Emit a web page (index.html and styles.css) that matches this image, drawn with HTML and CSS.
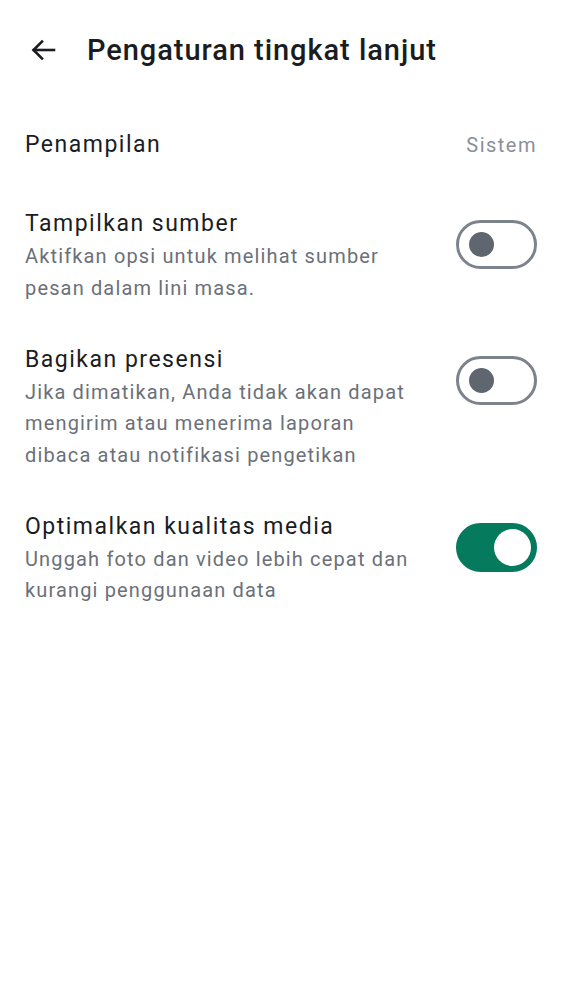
FILE: index.html
```html
<!DOCTYPE html>
<html lang="id">
<head>
<meta charset="utf-8">
<title>Pengaturan tingkat lanjut</title>
<link rel="stylesheet" href="styles.css">
</head>
<body>
<div class="screen">
  <header class="topbar">
    <button class="back" aria-label="Kembali">
      <svg width="28" height="28" viewBox="0 0 28 28" fill="none" stroke="#1b1c21" stroke-width="2.6" stroke-linecap="square" stroke-linejoin="miter">
        <path d="M25 14H5"/>
        <path d="M13 5.5L4.5 14l8.5 8.5"/>
      </svg>
    </button>
    <h1 class="title">Pengaturan tingkat lanjut</h1>
  </header>

  <div class="list">
    <div class="row row-simple">
      <span class="label">Penampilan</span>
      <span class="value">Sistem</span>
    </div>

    <div class="row">
      <div class="text">
        <div class="label">Tampilkan sumber</div>
        <div class="desc">Aktifkan opsi untuk melihat sumber pesan dalam lini masa.</div>
      </div>
      <div class="switch"><span class="knob"></span></div>
    </div>

    <div class="row">
      <div class="text">
        <div class="label">Bagikan presensi</div>
        <div class="desc">Jika dimatikan, Anda tidak akan dapat mengirim atau menerima laporan dibaca atau notifikasi pengetikan</div>
      </div>
      <div class="switch"><span class="knob"></span></div>
    </div>

    <div class="row">
      <div class="text">
        <div class="label">Optimalkan kualitas media</div>
        <div class="desc">Unggah foto dan video lebih cepat dan kurangi penggunaan data</div>
      </div>
      <div class="switch on"><span class="knob"></span></div>
    </div>
  </div>
</div>
</body>
</html>
```

FILE: styles.css
```css
* { box-sizing: border-box; }
html, body {
  margin: 0;
  padding: 0;
  background: #ffffff;
}
body {
  font-family: Roboto, "Noto Sans", Arial, sans-serif;
  color: #1b1c21;
}
.screen {
  width: 562px;
  min-height: 1000px;
}
.topbar {
  display: flex;
  align-items: center;
  height: 100px;
  padding: 0 0 0 28px;
}
.back {
  display: flex;
  align-items: center;
  justify-content: center;
  width: 30px;
  height: 30px;
  padding: 0;
  border: 0;
  background: none;
  margin-right: 29px;
}
.title {
  margin: 0;
  font-size: 29px;
  font-weight: 500;
  line-height: 36px;
  color: #1b1c21;
  letter-spacing: 0.95px;
}
.list {
  display: flex;
  flex-direction: column;
  gap: 38.5px;
  padding: 28px 25px 0 25px;
}
.row {
  display: flex;
  justify-content: space-between;
  align-items: flex-start;
}
.row-simple {
  align-items: center;
  margin-bottom: 7.5px;
}
.text {
  width: 395px;
}
.label {
  font-size: 23px;
  line-height: 33px;
  letter-spacing: 1.5px;
  color: #1b1c21;
}
.value {
  font-size: 20px;
  letter-spacing: 1.5px;
  color: #8a9099;
}
.desc {
  margin-top: 1px;
  font-size: 20px;
  line-height: 31.5px;
  letter-spacing: 1.15px;
  color: #6b7079;
}
.switch {
  position: relative;
  flex: none;
  width: 81px;
  height: 49px;
  margin-top: 13px;
  border: 3px solid #7c838d;
  border-radius: 25px;
  background: #ffffff;
}
.switch .knob {
  position: absolute;
  left: 10px;
  top: 9px;
  width: 25px;
  height: 25px;
  border-radius: 50%;
  background: #5f6670;
}
.switch.on {
  background: #057a5d;
  border-color: #057a5d;
}
.switch.on .knob {
  left: 35px;
  top: 3px;
  width: 37px;
  height: 37px;
  background: #ffffff;
}
```
